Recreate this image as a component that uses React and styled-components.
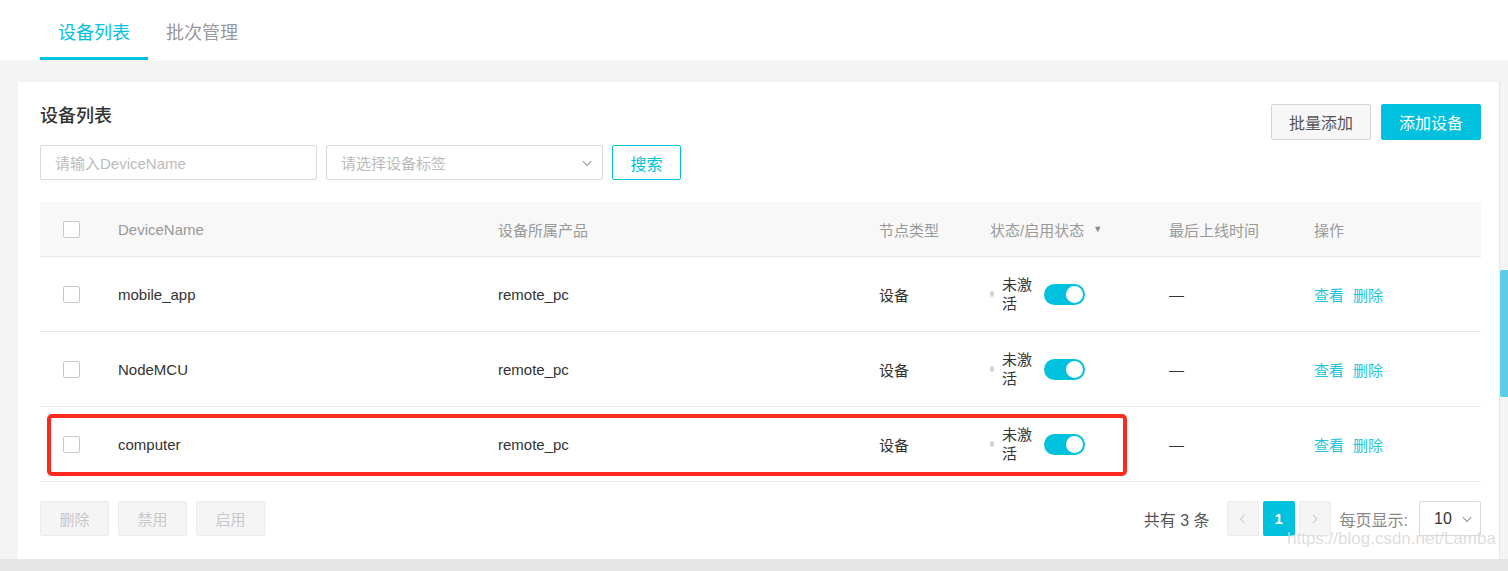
import styled, { createGlobalStyle } from "styled-components";

const cyan = "#00c1de";

const rows = [
  { name: "mobile_app", product: "remote_pc" },
  { name: "NodeMCU", product: "remote_pc" },
  { name: "computer", product: "remote_pc", marked: true },
];

const GlobalStyle = createGlobalStyle`
  html, body {
    margin: 0;
    padding: 0;
    background: #f4f4f4;
    font-family: "Liberation Sans", "Noto Sans CJK SC", sans-serif;
    color: #333;
  }
`;

const Page = styled.div`
  width: 1508px;
  height: 571px;
  overflow: hidden;
  position: relative;
  background: #f4f4f4;
  display: flex;
  flex-direction: column;
`;

const TabBar = styled.div`
  height: 60px;
  background: #fff;
  display: flex;
  padding-left: 40px;
  box-sizing: border-box;
`;

const Tab = styled.div`
  height: 60px;
  box-sizing: border-box;
  padding: 4px 18px 0;
  display: flex;
  align-items: center;
  font-size: 18px;
  color: ${(p) => (p.active ? cyan : "#999")};
  border-bottom: 3px solid ${(p) => (p.active ? cyan : "transparent")};
`;

const Card = styled.div`
  margin: 22px 8px 0 18px;
  background: #fff;
  padding: 22px 18px 22px 22px;
  box-sizing: border-box;
  height: 477px;
  border-right: 1px solid #e6e6e6;
`;

const Header = styled.div`
  display: flex;
  justify-content: space-between;
  align-items: flex-start;
`;

const Title = styled.div`
  font-size: 18px;
  line-height: 24px;
  font-weight: 500;
  color: #333;
`;

const Filters = styled.div`
  display: flex;
  gap: 9px;
  margin-top: 17px;
`;

const Field = styled.div`
  width: 277px;
  height: 35px;
  box-sizing: border-box;
  border: 1px solid #d9d9d9;
  border-radius: 2px;
  display: flex;
  align-items: center;
  justify-content: space-between;
  padding: 0 8px 0 14px;
  font-size: 15px;
  color: #bbb;
`;

const Button = styled.div`
  height: ${(p) => p.h || 35}px;
  width: ${(p) => p.w}px;
  box-sizing: border-box;
  border-radius: 2px;
  display: flex;
  align-items: center;
  justify-content: center;
  font-size: ${(p) => p.fs || 16}px;
  ${(p) =>
    p.variant === "primary"
      ? `background: ${cyan}; color: #fff; border: 1px solid ${cyan};`
      : p.variant === "outline"
      ? `background: #fff; color: ${cyan}; border: 1px solid ${cyan};`
      : p.variant === "disabled"
      ? `background: #f5f5f5; color: #c8c8c8; border: 1px solid #ebebeb;`
      : `background: #f7f7f7; color: #555; border: 1px solid #d4d4d4;`}
`;

const Actions = styled.div`
  display: flex;
  gap: 10px;
`;

const Table = styled.div`
  margin-top: 22px;
`;

const Row = styled.div`
  position: relative;
  display: grid;
  grid-template-columns: 78px 380px 381px 111px 179px 145px 168px;
  align-items: center;
  height: ${(p) => (p.head ? 55 : 75)}px;
  background: ${(p) => (p.head ? "#f8f8f8" : "#fff")};
  border-bottom: 1px solid #e8e8e8;
  box-sizing: border-box;
  font-size: 15px;
  color: ${(p) => (p.head ? "#999" : "#333")};
`;

const Cell = styled.div`
  display: flex;
  align-items: center;
`;

const Check = styled.div`
  width: 17px;
  height: 17px;
  margin-left: 23px;
  box-sizing: border-box;
  border: 1px solid #c9c9c9;
  border-radius: 2px;
  background: #fff;
`;

const Caret = styled.span`
  font-size: 9px;
  color: #888;
  margin-left: 9px;
`;

const Dot = styled.span`
  width: 4px;
  height: 6px;
  border-radius: 2px;
  background: #d5d5d5;
  margin-right: 8px;
`;

const StatusText = styled.span`
  width: 34px;
  line-height: 19px;
  font-size: 15px;
  color: #333;
`;

const Switch = styled.span`
  width: 41px;
  height: 21px;
  border-radius: 11px;
  background: ${cyan};
  margin-left: 8px;
  display: flex;
  align-items: center;
  justify-content: flex-end;
  padding: 0 2px;
  box-sizing: border-box;
  &::after {
    content: "";
    width: 17px;
    height: 17px;
    border-radius: 50%;
    background: #fff;
  }
`;

const Link = styled.span`
  color: #1ec4e0;
  margin-right: 9px;
`;

const Marker = styled.div`
  position: absolute;
  left: 7px;
  top: 7px;
  width: 1080px;
  height: 62px;
  box-sizing: border-box;
  border: 4px solid #ff2a1f;
  border-radius: 5px;
  pointer-events: none;
`;

const Footer = styled.div`
  margin-top: 19px;
  display: flex;
  justify-content: space-between;
  align-items: center;
`;

const Bulk = styled.div`
  display: flex;
  gap: 9px;
`;

const Pager = styled.div`
  display: flex;
  align-items: center;
  font-size: 16px;
  color: #555;
`;

const PagerLabel = styled.span`
  margin: ${(p) => p.m};
  color: ${(p) => p.color || "#555"};
`;

const PageBtn = styled.div`
  width: 32px;
  height: 35px;
  box-sizing: border-box;
  border-radius: 2px;
  display: flex;
  align-items: center;
  justify-content: center;
  margin-left: 4px;
  font-size: 15px;
  font-weight: 700;
  ${(p) =>
    p.active
      ? `background: ${cyan}; color: #fff;`
      : `background: #f5f5f5; border: 1px solid #ececec; color: #ccc;`}
`;

const SizeSelect = styled.div`
  width: 62px;
  height: 35px;
  box-sizing: border-box;
  border: 1px solid #d9d9d9;
  border-radius: 2px;
  margin-left: 11px;
  display: flex;
  align-items: center;
  justify-content: space-between;
  padding: 0 6px 0 14px;
  color: #333;
  font-size: 16px;
`;

const BottomStrip = styled.div`
  flex: 1;
  background: #e6e6e6;
`;

const Watermark = styled.div`
  position: absolute;
  left: 1287px;
  top: 529px;
  font-size: 17px;
  color: rgba(215, 215, 215, 0.85);
  white-space: nowrap;
  pointer-events: none;
`;

const SideTab = styled.div`
  position: absolute;
  right: 0;
  top: 270px;
  width: 8px;
  height: 127px;
  background: #5ccde6;
  border-radius: 2px 0 0 2px;
  box-shadow: -1px 0 0 #e0f4f8;
`;

function Chevron({ dir = "down", color = "#999", size = 14 }) {
  const d = {
    down: "M3 5.5l4.5 4.5 4.5-4.5",
    left: "M9 3L5 7.5 9 12",
    right: "M5.5 3l4 4.5-4 4.5",
  }[dir];
  return (
    <svg width={size} height={size} viewBox="0 0 15 15" fill="none">
      <path d={d} stroke={color} strokeWidth="1.2" />
    </svg>
  );
}

export default function App() {
  return (
    <Page>
      <GlobalStyle />
      <TabBar>
        <Tab active>设备列表</Tab>
        <Tab>批次管理</Tab>
      </TabBar>
      <Card>
        <Header>
          <div>
            <Title>设备列表</Title>
            <Filters>
              <Field>请输入DeviceName</Field>
              <Field>
                请选择设备标签
                <Chevron />
              </Field>
              <Button variant="outline" w={69}>
                搜索
              </Button>
            </Filters>
          </div>
          <Actions>
            <Button w={100} h={36}>
              批量添加
            </Button>
            <Button variant="primary" w={100} h={36}>
              添加设备
            </Button>
          </Actions>
        </Header>
        <Table>
          <Row head>
            <Cell>
              <Check />
            </Cell>
            <Cell>DeviceName</Cell>
            <Cell>设备所属产品</Cell>
            <Cell>节点类型</Cell>
            <Cell>
              状态/启用状态<Caret>▼</Caret>
            </Cell>
            <Cell>最后上线时间</Cell>
            <Cell>操作</Cell>
          </Row>
          {rows.map((r) => (
            <Row key={r.name}>
              <Cell>
                <Check />
              </Cell>
              <Cell>{r.name}</Cell>
              <Cell>{r.product}</Cell>
              <Cell>设备</Cell>
              <Cell>
                <Dot />
                <StatusText>未激活</StatusText>
                <Switch />
              </Cell>
              <Cell>—</Cell>
              <Cell>
                <Link>查看</Link>
                <Link>删除</Link>
              </Cell>
              {r.marked && <Marker />}
            </Row>
          ))}
        </Table>
        <Footer>
          <Bulk>
            <Button variant="disabled" w={69} fs={15}>
              删除
            </Button>
            <Button variant="disabled" w={69} fs={15}>
              禁用
            </Button>
            <Button variant="disabled" w={69} fs={15}>
              启用
            </Button>
          </Bulk>
          <Pager>
            <PagerLabel m="0 13px 0 0">共有 3 条</PagerLabel>
            <PageBtn>
              <Chevron dir="left" color="#ccc" />
            </PageBtn>
            <PageBtn active>1</PageBtn>
            <PageBtn>
              <Chevron dir="right" color="#ccc" />
            </PageBtn>
            <PagerLabel m="0 0 0 9px" color="#888">
              每页显示:
            </PagerLabel>
            <SizeSelect>
              10
              <Chevron />
            </SizeSelect>
          </Pager>
        </Footer>
      </Card>
      <BottomStrip />
      <Watermark>https://blog.csdn.net/Lamba</Watermark>
      <SideTab />
    </Page>
  );
}
